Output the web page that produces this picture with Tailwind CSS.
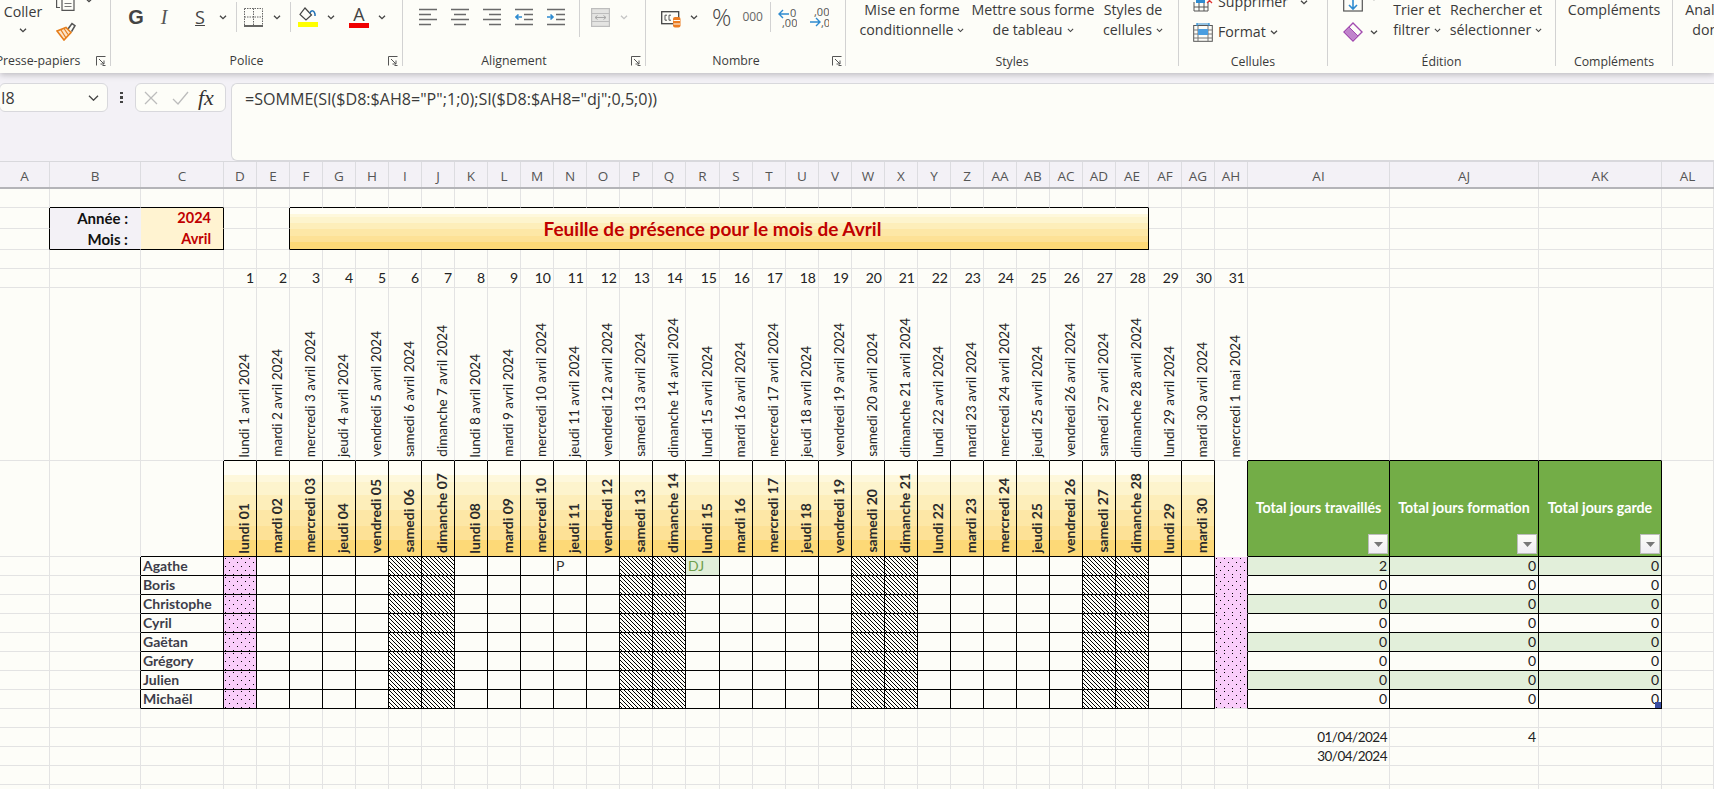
<!DOCTYPE html>
<html>
<head>
  <title>Feuille de présence</title>
  <script src="https://cdn.jsdelivr.net/npm/@tailwindcss/browser@4"></script>
</head>
<body class="w-[1714px] h-[789px] overflow-hidden bg-[#fdfdf8] font-['Open_Sans',sans-serif] text-[#3a3a3a]">

  <!-- Fill patterns for the hatched and dotted cells -->
  <svg class="absolute w-0 h-0">
    <defs>
      <pattern id="hatch" width="4" height="4" patternUnits="userSpaceOnUse">
        <rect width="4" height="4" fill="#fdfdf8"/>
        <path d="M0 0h1v1H0zM1 1h1v1H1zM2 2h1v1H2zM3 3h1v1H3z" fill="#000"/>
      </pattern>
      <pattern id="dots" width="8" height="8" patternUnits="userSpaceOnUse">
        <rect width="8" height="8" fill="#f9cdfa"/>
        <path d="M1 1h1v1H1zM5 5h1v1H5z" fill="#000"/>
      </pattern>
    </defs>
  </svg>

  <!-- Ribbon -->
  <div class="relative z-10 flex h-[73px] overflow-hidden bg-[#fdfdf8] shadow-[0_2px_6px_rgba(0,0,0,0.22)] text-[14.2px] leading-[20px]">

    <!-- Presse-papiers -->
    <div class="flex flex-col w-[111px] h-[66px] flex-none border-r border-[#d2d2d2]">
      <div class="flex flex-none h-[54px]">
        <div class="flex flex-col items-center w-[46px] pt-[2px]">
          <span>Coller</span>
          <svg class="w-2 h-[5px] mt-[6px]" viewBox="0 0 8 5" fill="none" stroke="#444" stroke-width="1.3"><path d="M1 .7l3 3 3-3"/></svg>
        </div>
        <div class="flex flex-col ml-[10px]">
          <div class="flex h-[22px]">
            <svg class="w-5 h-[11px]" viewBox="0 0 20 11" fill="none" stroke="#555" stroke-width="1.2"><path d="M.6 0V7.5H4"/><path d="M6 0V10.4H18V0"/><path d="M8.5 3.5h7M8.5 6.5h7" stroke="#777"/></svg>
            <svg class="w-2 h-[5px] ml-[9px] -mt-[2px]" viewBox="0 0 8 5" fill="none" stroke="#444" stroke-width="1.3"><path d="M1 .7l3 3 3-3"/></svg>
          </div>
          <svg class="w-5 h-[19px]" viewBox="0 0 20 19" fill="none"><path d="M12 7l4-5.5 3 2.2-3.5 6" stroke="#555" stroke-width="1.6"/><path d="M1 9l9-3.5 5 5L8 18z" fill="#fbe3c8" stroke="#e67e1b" stroke-width="1.6"/><path d="M5 8l5 8M8 6.5l4 6" stroke="#e67e1b" stroke-width="1.2"/></svg>
        </div>
      </div>
      <div class="flex flex-none items-center h-[14px] text-[12.3px]">
        <span class="flex-none w-[90px] -ml-[7px] text-center whitespace-nowrap">Presse-papiers</span>
        <svg class="w-[10px] h-[10px] ml-[13px]" viewBox="0 0 10 10" fill="none" stroke="#555"><path d="M.5 9.5V.5h9M3 3l5 5M8 4.5V8H4.5M9.5 9.5h-3"/></svg>
      </div>
    </div>

    <!-- Police -->
    <div class="flex flex-col w-[292px] h-[66px] flex-none border-r border-[#d2d2d2]">
      <div class="flex flex-none items-center h-[34px] mb-[20px]">
        <span class="ml-[14px] w-[22px] text-center text-[20px] font-bold font-['Liberation_Sans',sans-serif] text-[#444]">G</span>
        <span class="ml-[6px] w-[22px] text-center text-[20px] italic font-['Liberation_Serif',serif] text-[#555]">I</span>
        <span class="ml-[14px] w-[22px] text-center text-[18px] underline text-[#444]">S</span>
        <svg class="ml-[8px] w-2 h-[5px]" viewBox="0 0 8 5" fill="none" stroke="#444" stroke-width="1.3"><path d="M1 .7l3 3 3-3"/></svg>
        <div class="ml-[9px] w-px h-[30px] bg-[#d2d2d2]"></div>
        <svg class="ml-[7px] w-[19px] h-[19px]" viewBox="0 0 19 19" fill="none" stroke="#666" stroke-dasharray="1.5 1"><path d="M.5.5h18v17M.5.5v17M9.5.5v17M.5 9h18"/><path d="M0 18h19" stroke="#333" stroke-width="1.5" stroke-dasharray="none"/></svg>
        <svg class="ml-[10px] w-2 h-[5px]" viewBox="0 0 8 5" fill="none" stroke="#444" stroke-width="1.3"><path d="M1 .7l3 3 3-3"/></svg>
        <div class="ml-[9px] w-px h-[30px] bg-[#d2d2d2]"></div>
        <svg class="ml-[7px] w-5 h-5" viewBox="0 0 20 20" fill="none"><path d="M7 1l6.5 7L8 13 2 7.5z" stroke="#444" stroke-width="1.2"/><path d="M12 6c1-3 4-3 5 1v2" stroke="#1f6fb5" stroke-width="1.5"/><rect x="0" y="15" width="20" height="5" fill="#ffff00"/></svg>
        <svg class="ml-[9px] w-2 h-[5px]" viewBox="0 0 8 5" fill="none" stroke="#444" stroke-width="1.3"><path d="M1 .7l3 3 3-3"/></svg>
        <div class="ml-[14px] w-5 flex flex-col items-center">
          <span class="text-[18px] leading-[16px] text-[#444]">A</span>
          <div class="w-5 h-[5px] mt-[1px] bg-[#f00000]"></div>
        </div>
        <svg class="ml-[9px] w-2 h-[5px]" viewBox="0 0 8 5" fill="none" stroke="#444" stroke-width="1.3"><path d="M1 .7l3 3 3-3"/></svg>
      </div>
      <div class="flex flex-none items-center h-[14px] text-[12.3px]">
        <span class="flex-1 text-center">Police</span>
        <svg class="w-[10px] h-[10px] ml-[6px] mr-1" viewBox="0 0 10 10" fill="none" stroke="#555"><path d="M.5 9.5V.5h9M3 3l5 5M8 4.5V8H4.5M9.5 9.5h-3"/></svg>
      </div>
    </div>

    <!-- Alignement -->
    <div class="flex flex-col w-[243px] h-[66px] flex-none border-r border-[#d2d2d2]">
      <div class="flex flex-none items-center h-[34px] mb-[20px]">
        <svg class="ml-[16px] w-[18px] h-[18px]" viewBox="0 0 18 18" stroke="#6a6a6a" stroke-width="1.6"><path d="M0 1.5h18M0 6.5h12M0 11.5h18M0 16.5h12"/></svg>
        <svg class="ml-[14px] w-[18px] h-[18px]" viewBox="0 0 18 18" stroke="#6a6a6a" stroke-width="1.6"><path d="M0 1.5h18M3 6.5h12M0 11.5h18M3 16.5h12"/></svg>
        <svg class="ml-[14px] w-[18px] h-[18px]" viewBox="0 0 18 18" stroke="#6a6a6a" stroke-width="1.6"><path d="M0 1.5h18M6 6.5h12M0 11.5h18M6 16.5h12"/></svg>
        <svg class="ml-[14px] w-[18px] h-[18px]" viewBox="0 0 18 18" fill="none" stroke="#6a6a6a" stroke-width="1.6"><path d="M0 1.5h18M9 6.5h9M9 11.5h9M0 16.5h18"/><path d="M7 9H1M3.5 6.5L1 9l2.5 2.5" stroke="#2e8bd0"/></svg>
        <svg class="ml-[14px] w-[18px] h-[18px]" viewBox="0 0 18 18" fill="none" stroke="#6a6a6a" stroke-width="1.6"><path d="M0 1.5h18M9 6.5h9M9 11.5h9M0 16.5h18"/><path d="M0 9h6M3.5 6.5L6 9l-2.5 2.5" stroke="#2e8bd0"/></svg>
        <div class="ml-[14px] w-px h-[40px] bg-[#d2d2d2]"></div>
        <svg class="ml-[11px] w-[19px] h-[19px]" viewBox="0 0 19 19" fill="none" stroke="#bdbdbd"><rect x=".5" y=".5" width="18" height="18" fill="#e4e4e2" stroke-width="1.4"/><path d="M.5 5.5h18M.5 13.5h18"/><path d="M4 9.5h11M6.5 7.5l-2.5 2 2.5 2M12.5 7.5l2.5 2-2.5 2" stroke="#a8a8a8"/></svg>
        <svg class="ml-[10px] w-2 h-[5px]" viewBox="0 0 8 5" fill="none" stroke="#c4c4c4" stroke-width="1.3"><path d="M1 .7l3 3 3-3"/></svg>
      </div>
      <div class="flex flex-none items-center h-[14px] text-[12.3px]">
        <span class="flex-1 text-center">Alignement</span>
        <svg class="w-[10px] h-[10px] ml-[6px] mr-1" viewBox="0 0 10 10" fill="none" stroke="#555"><path d="M.5 9.5V.5h9M3 3l5 5M8 4.5V8H4.5M9.5 9.5h-3"/></svg>
      </div>
    </div>

    <!-- Nombre -->
    <div class="flex flex-col w-[200px] h-[66px] flex-none border-r border-[#d2d2d2]">
      <div class="flex flex-none items-center h-[34px] mb-[20px]">
        <svg class="ml-[15px] mt-[4px] w-5 h-[17px]" viewBox="0 0 20 17" fill="none"><rect x=".7" y=".7" width="17" height="12" fill="#fdfdf8" stroke="#444" stroke-width="1.3"/><path d="M6 4.2H4v5h2M10 4.2H8v5h2" stroke="#555"/><rect x="12" y="6" width="7.5" height="10.5" rx="2" fill="#ec7c22"/><path d="M12.5 9.5h6.5M12.5 13h6.5" stroke="#fdfdf8"/></svg>
        <svg class="ml-[9px] w-2 h-[5px]" viewBox="0 0 8 5" fill="none" stroke="#444" stroke-width="1.3"><path d="M1 .7l3 3 3-3"/></svg>
        <span class="ml-[14px] text-[24px] leading-[30px] font-light text-[#444]">%</span>
        <span class="ml-[11px] text-[12px] leading-[18px] text-[#666]">000</span>
        <div class="ml-[7px] w-px h-[30px] bg-[#d2d2d2]"></div>
        <svg class="ml-[7px] w-[19px] h-[21px]" viewBox="0 0 19 21" fill="none"><path d="M11 7H1M5 3L1 7l4 4" stroke="#2e8bd0" stroke-width="1.4"/><text x="12" y="10" font-size="11" fill="#555" font-family="Open Sans">0</text><text x="4" y="20" font-size="11" fill="#555" font-family="Open Sans">,00</text></svg>
        <svg class="ml-[12px] w-5 h-[21px]" viewBox="0 0 20 21" fill="none"><text x="5" y="9" font-size="11" fill="#555" font-family="Open Sans">,00</text><path d="M1 15h10M7 11l4 4-4 4" stroke="#2e8bd0" stroke-width="1.4"/><text x="12" y="20" font-size="11" fill="#555" font-family="Open Sans">,0</text></svg>
      </div>
      <div class="flex flex-none items-center h-[14px] text-[12.3px]">
        <span class="flex-1 text-center">Nombre</span>
        <svg class="w-[10px] h-[10px] ml-[6px] mr-[3px]" viewBox="0 0 10 10" fill="none" stroke="#555"><path d="M.5 9.5V.5h9M3 3l5 5M8 4.5V8H4.5M9.5 9.5h-3"/></svg>
      </div>
    </div>

    <!-- Styles -->
    <div class="flex flex-col w-[333px] h-[66px] flex-none border-r border-[#d2d2d2]">
      <div class="flex flex-none h-[54px] whitespace-nowrap text-center">
        <div class="flex flex-col items-center w-[132px]">
          <span>Mise en forme</span>
          <span class="flex items-center gap-[4px]">conditionnelle <svg class="w-[7px] h-[5px]" viewBox="0 0 8 5" fill="none" stroke="#444" stroke-width="1.3"><path d="M1 .7l3 3 3-3"/></svg></span>
        </div>
        <div class="flex flex-col items-center w-[110px]">
          <span>Mettre sous forme</span>
          <span class="flex items-center gap-[4px]">de tableau <svg class="w-[7px] h-[5px]" viewBox="0 0 8 5" fill="none" stroke="#444" stroke-width="1.3"><path d="M1 .7l3 3 3-3"/></svg></span>
        </div>
        <div class="flex flex-col items-center w-[90px]">
          <span>Styles de</span>
          <span class="flex items-center gap-[4px]">cellules <svg class="w-[7px] h-[5px]" viewBox="0 0 8 5" fill="none" stroke="#444" stroke-width="1.3"><path d="M1 .7l3 3 3-3"/></svg></span>
        </div>
      </div>
      <div class="flex-none h-[14px] text-[12.3px] leading-[16px] text-center">Styles</div>
    </div>

    <!-- Cellules -->
    <div class="flex flex-col w-[149px] h-[66px] flex-none border-r border-[#d2d2d2]">
      <div class="flex flex-none flex-col h-[54px]">
        <div class="flex items-center h-[30px] -mt-[13px] pl-[14px]">
          <svg class="w-5 h-5" viewBox="0 0 20 20" fill="none"><path d="M1 10v9h14v-9M1 15h14M6 10v9M11 10v9" stroke="#555"/><rect x="3" y="6" width="9" height="5" fill="#2e8bd0"/><path d="M14 6l5 5M19 6l-5 5" stroke="#e03030" stroke-width="1.3"/></svg>
          <span class="ml-[5px]">Supprimer</span>
          <svg class="ml-[12px] w-2 h-[5px]" viewBox="0 0 8 5" fill="none" stroke="#444" stroke-width="1.3"><path d="M1 .7l3 3 3-3"/></svg>
        </div>
        <div class="flex items-center h-[30px] pl-[14px]">
          <svg class="w-5 h-5" viewBox="0 0 20 20" fill="none"><rect x=".7" y="3.5" width="18.6" height="15.8" stroke="#555"/><path d="M.7 8h18.6M.7 12h18.6M.7 16h18.6M5 3.5v16M15 3.5v16" stroke="#777"/><rect x="5" y="7" width="10" height="6" fill="#4a9ee0"/><path d="M4 1v3M16 1v3M4 2h12" stroke="#2e8bd0" stroke-width="1.2"/></svg>
          <span class="ml-[5px]">Format</span>
          <svg class="ml-[4px] w-2 h-[5px]" viewBox="0 0 8 5" fill="none" stroke="#444" stroke-width="1.3"><path d="M1 .7l3 3 3-3"/></svg>
        </div>
      </div>
      <div class="flex-none h-[14px] text-[12.3px] leading-[16px] text-center">Cellules</div>
    </div>

    <!-- Edition -->
    <div class="flex flex-col w-[228px] h-[66px] flex-none border-r border-[#d2d2d2]">
      <div class="flex flex-none h-[54px] whitespace-nowrap">
        <div class="flex flex-col w-[52px] pl-[15px]">
          <div class="flex items-center h-[30px] -mt-[13px]">
            <svg class="w-5 h-5" viewBox="0 0 20 20" fill="none"><rect x=".7" y="-4" width="18.6" height="23" stroke="#555" stroke-width="1.2"/><path d="M10 7v10M6 13l4 4 4-4" stroke="#2e8bd0" stroke-width="1.6"/></svg>
            <svg class="ml-[7px] w-2 h-[5px] -mt-[8px]" viewBox="0 0 8 5" fill="none" stroke="#444" stroke-width="1.3"><path d="M1 .7l3 3 3-3"/></svg>
          </div>
          <div class="flex items-center h-[30px]">
            <svg class="w-5 h-5" viewBox="0 0 20 20" fill="none"><path d="M1 10l9-9 9 9-9 9z" fill="#fdfdf8" stroke="#a24bb0" stroke-width="1.4"/><path d="M1 10l5-5 9 9-5 5z" fill="#c084cc" stroke="#a24bb0"/></svg>
            <svg class="ml-[7px] w-2 h-[5px]" viewBox="0 0 8 5" fill="none" stroke="#444" stroke-width="1.3"><path d="M1 .7l3 3 3-3"/></svg>
          </div>
        </div>
        <div class="flex flex-col items-center w-[74px]">
          <span>Trier et</span>
          <span class="flex items-center gap-[4px]">filtrer <svg class="w-[7px] h-[5px]" viewBox="0 0 8 5" fill="none" stroke="#444" stroke-width="1.3"><path d="M1 .7l3 3 3-3"/></svg></span>
        </div>
        <div class="flex flex-col items-center w-[84px]">
          <span>Rechercher et</span>
          <span class="flex items-center gap-[4px]">sélectionner <svg class="w-[7px] h-[5px]" viewBox="0 0 8 5" fill="none" stroke="#444" stroke-width="1.3"><path d="M1 .7l3 3 3-3"/></svg></span>
        </div>
      </div>
      <div class="flex-none h-[14px] text-[12.3px] leading-[16px] text-center">Édition</div>
    </div>

    <!-- Complements -->
    <div class="flex flex-col w-[117px] h-[66px] flex-none border-r border-[#d2d2d2]">
      <div class="flex-none h-[54px] text-center">Compléments</div>
      <div class="flex-none h-[14px] text-[12.3px] leading-[16px] text-center">Compléments</div>
    </div>

    <!-- Analyse -->
    <div class="flex flex-col items-center flex-none w-[72px] ml-[12px] whitespace-nowrap">
      <span>Analyse de</span>
      <span>données</span>
    </div>
  </div>

  <!-- Formula bar -->
  <div class="flex h-[88px] pt-[10px] bg-[#f3f1f6]">
    <div class="flex items-center flex-none w-[109px] h-[29px] -ml-[1px] pl-[1px] pr-[8px] bg-[#fdfdf8] border border-[#d8d8dc] rounded-md text-[16px]">
      <span class="flex-1">I8</span>
      <svg class="w-[11px] h-[6px]" viewBox="0 0 11 6" fill="none" stroke="#444" stroke-width="1.3"><path d="M1 .7l4.5 4.5L10 .7"/></svg>
    </div>
    <div class="flex flex-col justify-center items-center gap-[2px] flex-none w-[27px] h-[29px]">
      <div class="w-[2.5px] h-[2.5px] bg-[#444]"></div>
      <div class="w-[2.5px] h-[2.5px] bg-[#444]"></div>
      <div class="w-[2.5px] h-[2.5px] bg-[#444]"></div>
    </div>
    <div class="flex items-center flex-none w-[91px] h-[29px] pl-[8px] bg-[#fdfdf8] border border-[#d8d8dc] rounded-md">
      <svg class="w-[14px] h-[14px]" viewBox="0 0 14 14" fill="none" stroke="#bcbcbc" stroke-width="1.3"><path d="M1 1l12 12M13 1L1 13"/></svg>
      <svg class="ml-[14px] w-[17px] h-[14px]" viewBox="0 0 17 14" fill="none" stroke="#bcbcbc" stroke-width="1.3"><path d="M1 8l5 5L16 1"/></svg>
      <span class="ml-[9px] text-[22px] italic font-['Liberation_Serif',serif] text-[#333]">fx</span>
    </div>
    <div class="flex-1 h-[78px] ml-[5px] pl-[13px] pt-[3px] bg-[#fdfdf8] border border-r-0 border-[#d8d8dc] rounded-l-md text-[16.1px] leading-[24px]">=SOMME(SI($D8:$AH8="P";1;0);SI($D8:$AH8="dj";0,5;0))</div>
  </div>

  <!-- Column letters -->
  <div id="letters" class="grid grid-cols-[50px_91px_83px_repeat(14,33px)_34px_repeat(16,33px)_142px_149px_123px_52px] h-[28px] bg-[#f3f1f6] border-b-2 border-[#b4b4b8] border-t border-t-[#d8d8dc]"></div>

  <!-- Sheet -->
  <div id="sheet" class="grid grid-cols-[50px_91px_83px_repeat(14,33px)_34px_repeat(16,33px)_142px_149px_123px_52px] grid-rows-[19px_21px_21px_19px_19px_173px_96px_repeat(13,19px)] font-['Lato',sans-serif] text-[14px] leading-[18px] text-[#222]"></div>

  <script>
    const letters = ['A','B','C','D','E','F','G','H','I','J','K','L','M','N','O','P','Q','R','S','T','U','V','W','X','Y','Z','AA','AB','AC','AD','AE','AF','AG','AH','AI','AJ','AK','AL'];
    document.getElementById('letters').innerHTML = letters.map(l =>
      `<div class="flex items-end justify-center pb-[1px] border-r border-[#dcdce0] font-['Open_Sans',sans-serif] text-[13.5px] leading-[20px] text-[#555]">${l}</div>`
    ).join('');

    const dayNames = ['lundi','mardi','mercredi','jeudi','vendredi','samedi','dimanche'];
    const names = ['Agathe','Boris','Christophe','Cyril','Gaëtan','Grégory','Julien','Michaël'];
    const totals = ['Total jours travaillés','Total jours formation','Total jours garde'];
    const band = "bg-[linear-gradient(#fffef6_0_15%,#fef8dc_15%_22%,#fdf4cd_22%_36%,#fdeeba_36%_52%,#fde7a6_52%_68%,#fde196_68%_83%,#fdd977_83%)]";
    const hatch = `<svg class="block w-full h-full" shape-rendering="crispEdges"><rect width="100%" height="100%" fill="url(#hatch)"/></svg>`;
    const dots = `<svg class="block w-full h-full" shape-rendering="crispEdges"><rect width="100%" height="100%" fill="url(#dots)"/></svg>`;
    const filterBtn = `<div class="absolute right-px bottom-0.5 flex items-center justify-center w-5 h-5 bg-linear-to-b from-[#fdfdf8] to-[#efedf3] border border-[#bdbdbd]"><svg class="w-[9px] h-[5px]" viewBox="0 0 9 5"><path d="M0 0h9L4.5 5z" fill="#777"/></svg></div>`;

    const B = 1, C = 2, D = 3, E = 4, F = 5, AE = 30, AG = 32, AH = 33, AI = 34, AK = 36;
    const isDay = c => c >= D && c <= AG;
    const isTotal = c => c >= AI && c <= AK;

    let html = '';
    for (let r = 1; r <= 20; r++) {
      for (let c = 0; c < letters.length; c++) {
        if ((r === 2 || r === 3) && c >= F && c <= AE && !(r === 2 && c === F)) continue;

        let right = "border-r-[#e3e3e3]";
        let bottom = "border-b-[#e3e3e3]";
        let extra = '';
        let content = '';

        // black frames
        if ((r === 2 || r === 3) && (c === 0 || c === C || c === E)) right = "border-r-black";
        if (r >= 7 && r <= 15 && ((c >= C && c <= AG) || (c >= AH && c <= AK))) right = "border-r-black";
        if (r >= 8 && r <= 15 && c === B) right = "border-r-black";
        if ((r === 1 || r === 3) && (c === B || c === C)) bottom = "border-b-black";
        if (r === 1 && c >= F && c <= AE) bottom = "border-b-black";
        if (r === 6 && (isDay(c) || isTotal(c))) bottom = "border-b-black";
        if (r >= 7 && r <= 15 && (c === C || isDay(c) || isTotal(c))) bottom = "border-b-black";

        // Annee / Mois box
        if (r === 2 || r === 3) {
          if (c === B) {
            right = "border-r-transparent";
            if (r === 2) bottom = "border-b-transparent";
            extra = "flex items-center justify-end pr-[12px] bg-[#f3f1f6] font-bold text-[15px] text-[#111]";
            content = r === 2 ? 'Année :' : 'Mois :';
          }
          if (c === C) {
            if (r === 2) bottom = "border-b-transparent";
            extra = "flex items-center justify-end pr-[12px] bg-[#fff3d1] font-bold text-[14.5px] text-[#c00000]";
            content = r === 2 ? '2024' : 'Avril';
          }
          if (c === F) {
            right = "border-r-black";
            bottom = "border-b-black";
            extra = `col-span-26 row-span-2 flex items-center justify-center pr-[13px] ${band} font-bold text-[19px] text-[#c00000]`;
            content = 'Feuille de présence pour le mois de Avril';
          }
        }

        // day numbers
        if (r === 5 && c >= D && c <= AH) {
          extra = "flex items-center justify-end pr-[2px]";
          content = c - D + 1;
        }

        // full dates
        if (r === 6 && c >= D && c <= AH) {
          const n = c - D;
          const label = n === 30 ? 'mercredi 1 mai 2024' : `${dayNames[n % 7]} ${n + 1} avril 2024`;
          extra = "flex items-end justify-end pr-[3px] pb-[3px] text-[13.5px]";
          content = `<span class="[writing-mode:vertical-rl] rotate-180 whitespace-nowrap">${label}</span>`;
        }

        // header row
        if (r === 7) {
          if (isDay(c)) {
            const n = c - D;
            extra = `flex items-end justify-end pr-[3px] pb-[3px] ${band} font-bold text-[#2b2b2b]`;
            content = `<span class="[writing-mode:vertical-rl] rotate-180 whitespace-nowrap">${dayNames[n % 7]} ${String(n + 1).padStart(2, '0')}</span>`;
          }
          if (c === AH) bottom = "border-b-transparent";
          if (isTotal(c)) {
            extra = "relative flex items-center justify-center pb-[1px] bg-[#73ad47] font-bold text-[14.2px] text-white whitespace-nowrap";
            content = totals[c - AI] + filterBtn;
          }
        }

        // people rows
        if (r >= 8 && r <= 15) {
          const n = c - D;
          if (c === C) {
            extra = "flex items-center pl-[2px] font-bold text-[#3d3d4a]";
            content = names[r - 8];
          }
          if (c === D || c === AH) {
            extra = "bg-[#f9cdfa]";
            content = dots;
            if (c === AH && r < 15) bottom = "border-b-transparent";
          }
          if (isDay(c) && (n % 7 === 5 || n % 7 === 6)) content = hatch;
          if (r === 8 && n === 10) {
            extra = "flex items-center pl-[2px] text-[#333]";
            content = 'P';
          }
          if (r === 8 && n === 14) {
            extra = "flex items-center pl-[2px] bg-[#e2efda] text-[#6f9f4d]";
            content = 'DJ';
          }
          if (isTotal(c)) {
            const alt = r % 2 === 0 ? "bg-[#e2efda]" : "";
            extra = `relative flex items-center justify-end pr-[2px] ${alt}`;
            content = r === 8 && c === AI ? 2 : 0;
            if (r === 15 && c === AK) content += `<div class="absolute right-0 bottom-0 w-[6px] h-[6px] bg-[#3a4da0]"></div>`;
          }
        }

        // dates under the table
        if (r === 17 && c === AI) { extra = "flex items-center justify-end pr-[2px] text-[13.5px] tracking-[-0.5px]"; content = '01/04/2024'; }
        if (r === 18 && c === AI) { extra = "flex items-center justify-end pr-[2px] text-[13.5px] tracking-[-0.5px]"; content = '30/04/2024'; }
        if (r === 17 && c === AI + 1) { extra = "flex items-center justify-end pr-[2px]"; content = '4'; }

        html += `<div class="min-w-0 border-r border-b ${right} ${bottom} ${extra}">${content}</div>`;
      }
    }
    document.getElementById('sheet').innerHTML = html;
  </script>
</body>
</html>
